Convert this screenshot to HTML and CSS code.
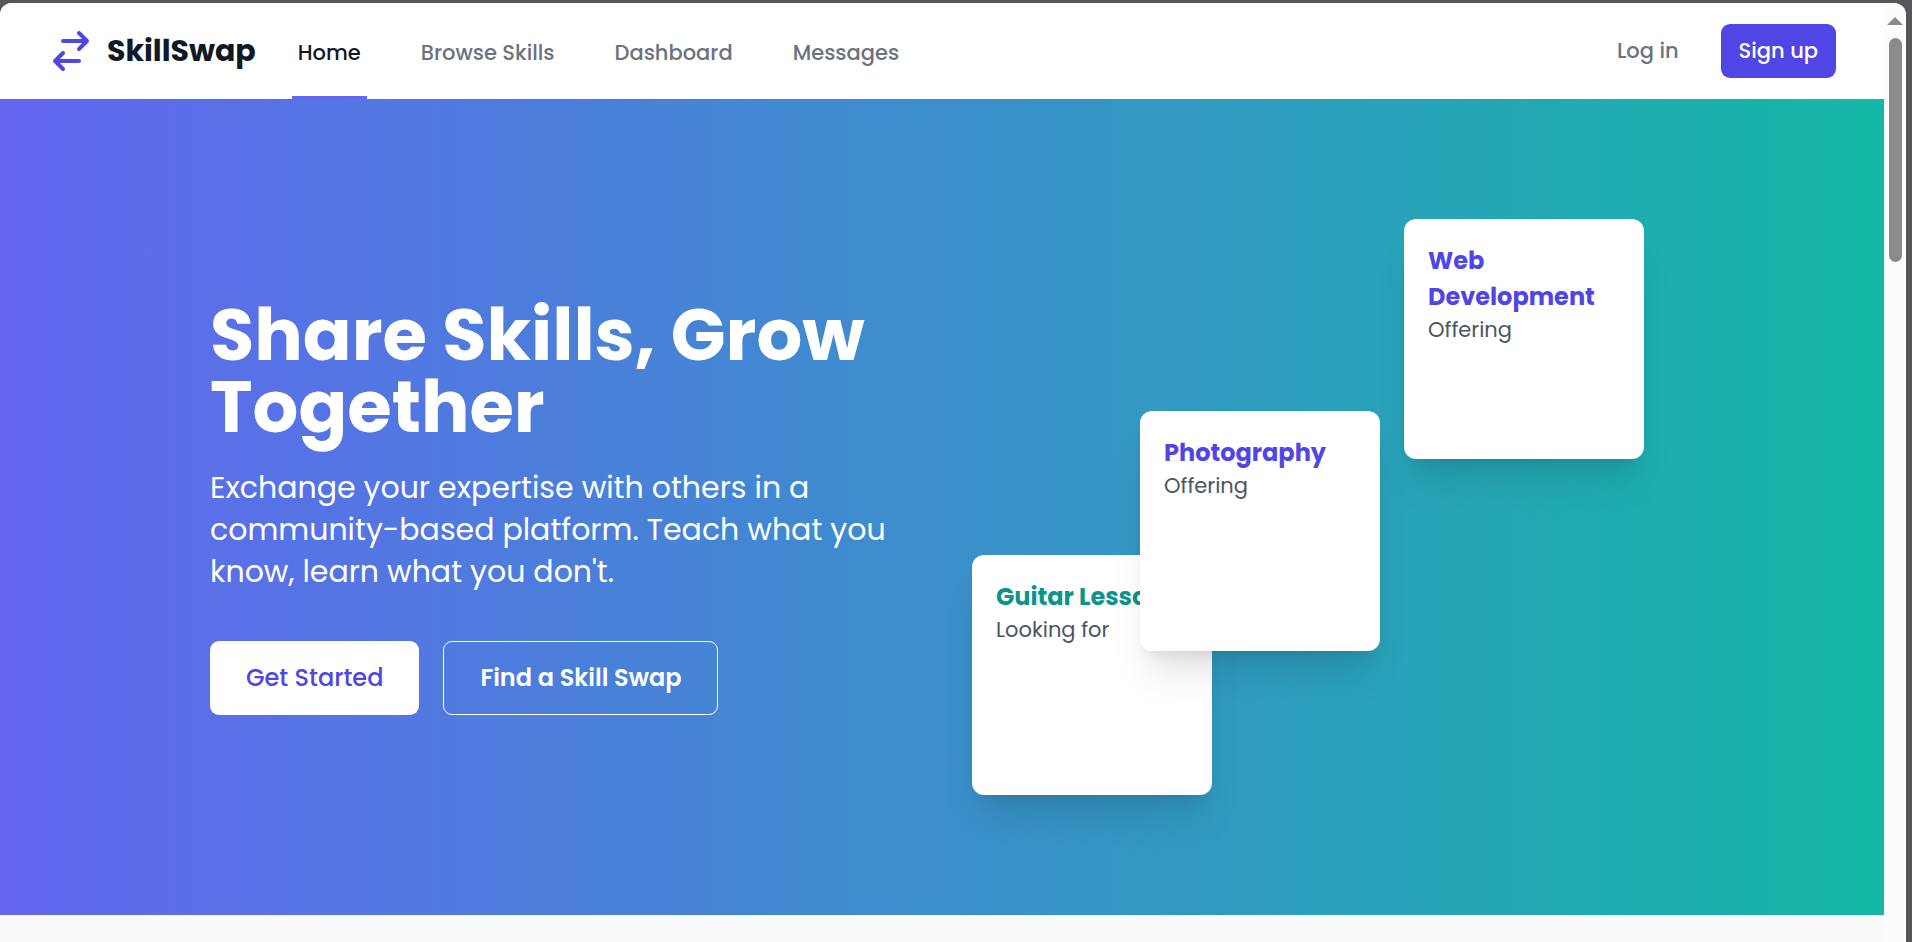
FILE: index.html
```html
<!DOCTYPE html>
<html lang="en">
<head>
<meta charset="utf-8">
<meta name="viewport" content="width=device-width, initial-scale=1">
<title>SkillSwap</title>
<link rel="stylesheet" href="styles.css">
</head>
<body>
<div class="window">
  <div class="page">
    <header class="header">
      <a class="brand" href="#">
        <svg class="brand-icon" viewBox="0 0 24 24" fill="none" stroke="currentColor" stroke-width="2" stroke-linecap="round" stroke-linejoin="round" aria-hidden="true"><path d="M8 7h12m0 0l-4-4m4 4l-4 4m0 6H4m0 0l4 4m-4-4l4-4"/></svg>
        <span class="brand-name">SkillSwap</span>
      </a>
      <nav class="nav">
        <a class="nav-link active" href="#">Home</a>
        <a class="nav-link" href="#">Browse Skills</a>
        <a class="nav-link" href="#">Dashboard</a>
        <a class="nav-link" href="#">Messages</a>
      </nav>
      <div class="account">
        <a class="login" href="#">Log in</a>
        <a class="signup" href="#">Sign up</a>
      </div>
    </header>
    <main>
      <section class="hero">
        <div class="hero-inner">
          <div class="intro">
            <h1 class="title">Share Skills, Grow<br>Together</h1>
            <p class="lead">Exchange your expertise with others in a<br>community-based platform. Teach what you<br>know, learn what you don't.</p>
            <div class="actions">
              <button class="btn btn-solid" type="button">Get Started</button>
              <button class="btn btn-outline" type="button">Find a Skill Swap</button>
            </div>
          </div>
          <div class="cards">
            <article class="card card-guitar">
              <h2 class="card-title teal">Guitar Lessons</h2>
              <p class="card-kind">Looking for</p>
            </article>
            <article class="card card-photo">
              <h2 class="card-title">Photography</h2>
              <p class="card-kind">Offering</p>
            </article>
            <article class="card card-web">
              <h2 class="card-title">Web<br>Development</h2>
              <p class="card-kind">Offering</p>
            </article>
          </div>
        </div>
      </section>
    </main>
  </div>
  <div class="scrollbar" aria-hidden="true">
    <svg class="scroll-up" viewBox="0 0 16 8"><path d="M0 8L8 0l8 8z" fill="#8b8b8b"/></svg>
    <div class="scroll-thumb"></div>
  </div>
</div>
</body>
</html>
```
FILE: styles.css
```css
* { box-sizing: border-box; }

body {
  margin: 0;
  height: 100vh;
  overflow: hidden;
  padding: 3px 6px 0 0;
  background: #56565b;
  font-family: Poppins, Inter, "Open Sans", sans-serif;
  color: #111827;
}

a { color: inherit; text-decoration: none; }
h1, h2, p { margin: 0; }

.window {
  display: flex;
  height: 100%;
  overflow: hidden;
  border-radius: 12px 12px 0 0;
  background: #fcfcfc;
}

.page { flex: 1; background: #f9fafb; }

.header {
  display: flex;
  align-items: center;
  height: 96px;
  padding: 0 48px 0 47px;
  background: #fff;
}

.brand { display: flex; align-items: center; gap: 12px; }
.brand-icon { width: 48px; height: 48px; color: #4f46e5; }
.brand-name { font-size: 30px; line-height: 42px; font-weight: 700; }

.nav {
  display: flex;
  align-self: stretch;
  gap: 48px;
  margin-left: 36px;
}

.nav-link {
  display: flex;
  align-items: center;
  padding: 6px 6px 0;
  border-bottom: 3px solid transparent;
  font-size: 21px;
  font-weight: 500;
  color: #6b7280;
}
.nav-link.active { border-color: #6366f1; color: #111827; }

.account { display: flex; align-items: center; gap: 42px; margin-left: auto; }
.login, .signup { font-size: 21px; line-height: 30px; font-weight: 500; }
.login { color: #6b7280; }
.signup {
  padding: 12px 18px;
  border-radius: 9px;
  background: #4f46e5;
  color: #fff;
}

.hero {
  padding: 120px 36px;
  background: linear-gradient(to right, #6366f1, #14b8a6);
}

.hero-inner {
  display: grid;
  grid-template-columns: 1fr 1fr;
  gap: 60px;
  align-items: center;
  max-width: 1464px;
  margin: 0 auto;
}

.intro { color: #fff; white-space: nowrap; }
.title { font-size: 72px; line-height: 72px; font-weight: 700; }
.lead { margin-top: 24px; font-size: 30px; line-height: 42px; }
.actions { display: flex; gap: 24px; margin-top: 48px; }

.btn {
  padding: 18px 36px;
  border: 0;
  border-radius: 9px;
  font-family: inherit;
  font-size: 24px;
  line-height: 36px;
}
.btn-solid { background: #fff; color: #4f46e5; font-weight: 500; }
.btn-outline {
  border: 1px solid #fff;
  background: transparent;
  color: #fff;
  font-weight: 600;
}

.cards { position: relative; height: 576px; }
.card {
  position: absolute;
  width: 240px;
  height: 240px;
  padding: 24px;
  border-radius: 12px;
  background: #fff;
  box-shadow: 0 30px 38px -8px rgba(0, 0, 0, .1), 0 12px 15px -9px rgba(0, 0, 0, .1);
}
.card-guitar { left: 0; bottom: 0; }
.card-photo { left: 168px; top: 192px; }
.card-web { right: 30px; top: 0; }
.card-title {
  font-size: 24px;
  line-height: 36px;
  font-weight: 700;
  color: #4f46e5;
  white-space: nowrap;
}
.card-title.teal { color: #0d9488; }
.card-kind { font-size: 21px; line-height: 30px; color: #4b5563; }

.scrollbar {
  display: flex;
  flex-direction: column;
  align-items: center;
  gap: 13px;
  width: 22px;
  padding-top: 14px;
  background: #fcfcfc;
}
.scroll-up { width: 16px; height: 8px; }
.scroll-thumb { width: 13px; height: 224px; border-radius: 7px; background: #8b8b8b; }
```
